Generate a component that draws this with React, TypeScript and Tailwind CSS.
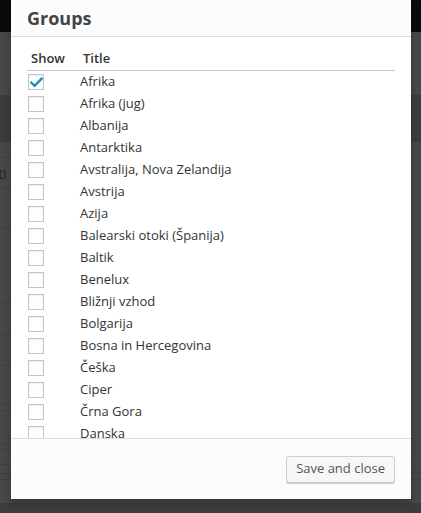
import React from "react";

const groups = [
  "Afrika",
  "Afrika (jug)",
  "Albanija",
  "Antarktika",
  "Avstralija, Nova Zelandija",
  "Avstrija",
  "Azija",
  "Balearski otoki (Španija)",
  "Baltik",
  "Benelux",
  "Bližnji vzhod",
  "Bolgarija",
  "Bosna in Hercegovina",
  "Češka",
  "Ciper",
  "Črna Gora",
  "Danska",
  "Egipt",
  "Estonija",
];

function Checkbox({ checked }: { checked: boolean }) {
  return (
    <span className="flex h-[16px] w-[16px] items-center justify-center border border-[#c4c4c4] bg-white shadow-[inset_0_1px_2px_rgba(0,0,0,0.07)]">
      {checked && (
        <svg width="13" height="11" viewBox="0 0 13 11">
          <path d="M1.5 5.8 L4.6 8.8 L11.5 1.8" fill="none" stroke="#1e8cbe" strokeWidth="2.4" strokeLinecap="square" />
        </svg>
      )}
    </span>
  );
}

export default function App() {
  return (
    <div
      className="relative h-[513px] w-[421px] overflow-hidden bg-[#474747]"
      style={{ fontFamily: '"Open Sans", "Noto Sans", sans-serif' }}
    >
      {/* dimmed page underneath */}
      <div className="flex flex-col">
        <div className="h-[32px] bg-[#0a0a0a]" />
        <div className="h-[63px] bg-[#474747]" />
        <div className="h-[47px] bg-[#3b3b3b]" />
        <div className="h-[15px] bg-[#474747]" />
        <div className="h-[9px] border-t border-[#404040] bg-[#474747]" />
        <div className="flex h-[15px] items-center bg-[#474747] text-[14px] leading-none text-[#1f1f1f]">
          <span className="-ml-[2px]">ti</span>
        </div>
        <div className="h-[7px] bg-[#474747]" />
        <div className="h-[40px] border-t border-[#3f3f3f] bg-[#474747]" />
        <div className="h-[74px] border-t border-[#3f3f3f] bg-[#474747]" />
        <div className="h-[32px] border-t border-[#3f3f3f] bg-[#474747]" />
        <div className="h-[31px] border-t border-[#3f3f3f] bg-[#474747]" />
        <div className="h-[38px] border-t border-[#3f3f3f] bg-[#474747]" />
        <div className="h-[7px] border-t border-[#3f3f3f] bg-[#474747]" />
        <div className="h-[33px] border-t border-[#3f3f3f] bg-[#474747]" />
        <div className="h-[6px] border-t border-[#3f3f3f] bg-[#474747]" />
        <div className="h-[15px] border-t border-[#3f3f3f] bg-[#474747]" />
        <div className="h-[9px] border-t border-[#3f3f3f] bg-[#474747]" />
        <div className="h-[6px] border-t border-[#3f3f3f] bg-[#474747]" />
        <div className="h-[24px] border-t border-[#3f3f3f] bg-[#474747]" />
        <div className="h-[20px] bg-[#3c3c3c]" />
      </div>

      {/* dialog */}
      <div className="absolute left-[11px] top-0 flex h-[499px] w-[400px] flex-col bg-white shadow-[0_3px_6px_rgba(0,0,0,0.3)]">
        <div className="flex h-[37px] shrink-0 items-center border-b border-[#dddddd] bg-[#fcfcfc] px-[16px]">
          <h1 className="text-[18px] font-bold leading-none text-[#444444]">Groups</h1>
        </div>

        <div className="min-h-0 flex-1 overflow-hidden px-[16px] pt-[10px]">
          <div className="flex h-[24px] items-center border-b border-[#cccccc] text-[13px] font-semibold text-[#333333]">
            <span className="w-[56px] pl-[4px]">Show</span>
            <span>Title</span>
          </div>
          {groups.map((g, i) => (
            <div key={g} className="flex h-[22px] items-center text-[13px] text-[#333333]">
              <span className="flex w-[53px] pl-[1px]">
                <Checkbox checked={i === 0} />
              </span>
              <span>{g}</span>
            </div>
          ))}
        </div>

        <div className="flex h-[61px] shrink-0 items-center justify-end border-t border-[#dddddd] bg-[#fcfcfc] px-[16px]">
          <button className="h-[27px] rounded-[3px] border border-[#cccccc] bg-[#f7f7f7] px-[9px] text-[13px] text-[#555555] shadow-[0_1px_0_#cccccc]">
            Save and close
          </button>
        </div>
      </div>
    </div>
  );
}
